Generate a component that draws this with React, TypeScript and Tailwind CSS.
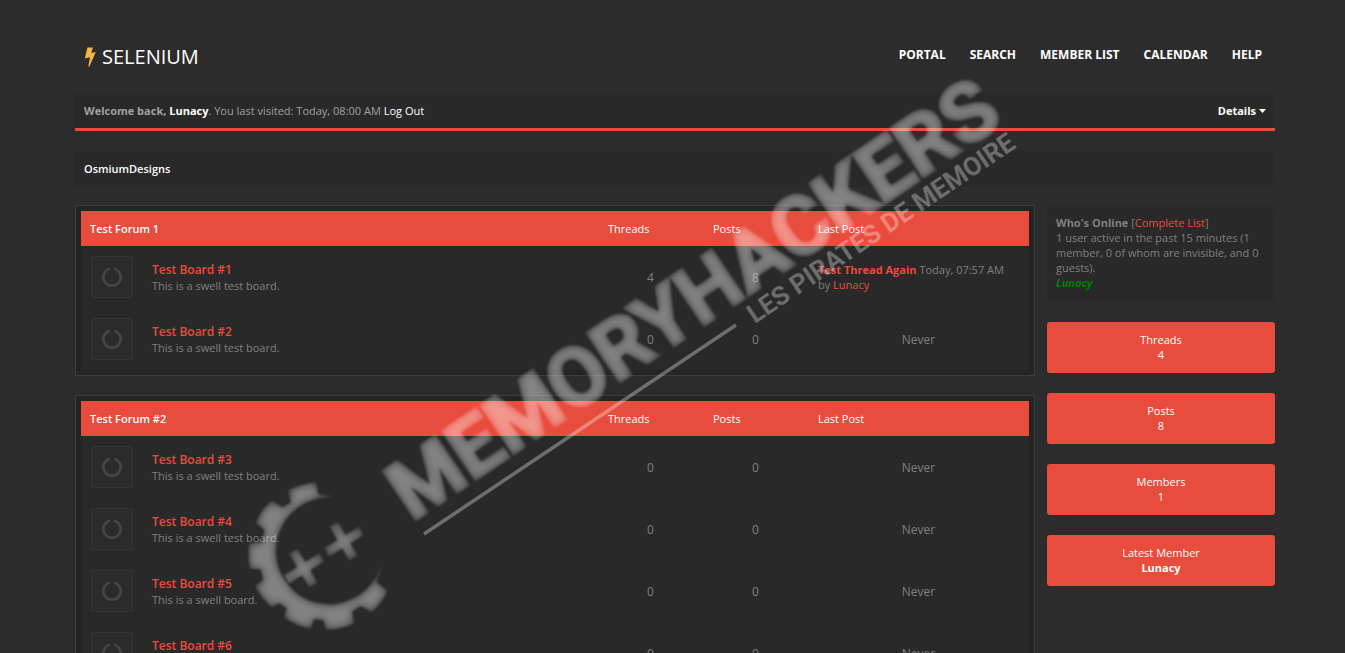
import React from 'react';

interface Board {
    name: string;
    description: string;
    threads: number;
    posts: number;
    lastPost?: { title: string; date: string; author: string };
}

interface Forum {
    title: string;
    boards: Board[];
}

const NAV_LINKS = ['Portal', 'Search', 'Member List', 'Calendar', 'Help'];

const FORUMS: Forum[] = [
    {
        title: 'Test Forum 1',
        boards: [
            {
                name: 'Test Board #1',
                description: 'This is a swell test board.',
                threads: 4,
                posts: 8,
                lastPost: { title: 'Test Thread Again', date: 'Today, 07:57 AM', author: 'Lunacy' }
            },
            { name: 'Test Board #2', description: 'This is a swell test board.', threads: 0, posts: 0 }
        ]
    },
    {
        title: 'Test Forum #2',
        boards: [
            { name: 'Test Board #3', description: 'This is a swell test board.', threads: 0, posts: 0 },
            { name: 'Test Board #4', description: 'This is a swell test board.', threads: 0, posts: 0 },
            { name: 'Test Board #5', description: 'This is a swell board.', threads: 0, posts: 0 },
            { name: 'Test Board #6', description: 'This is a swell board.', threads: 0, posts: 0 }
        ]
    }
];

const STATS = [
    { label: 'Threads', value: '4' },
    { label: 'Posts', value: '8' },
    { label: 'Members', value: '1' }
];

const BoltIcon = () => (
    <svg viewBox="0 0 12 20" className="h-5 w-3" aria-hidden="true">
        <path d="M3.4 0.5H9L7.2 6l4.6-1L5.4 19.5H4.3L6 10.2 0.8 11.4z" fill="#f7b643" />
    </svg>
);

const CaretIcon = () => (
    <svg viewBox="0 0 7 4" className="h-1 w-[7px]" aria-hidden="true">
        <path d="M0 0h7L3.5 4z" fill="#fff" />
    </svg>
);

const StatusIcon = () => (
    <div className="flex h-[42px] w-[42px] items-center justify-center border border-[#333] bg-[#2b2b2b]">
        <svg viewBox="0 0 20 20" className="h-5 w-5" fill="none" aria-hidden="true">
            <path d="M12 1.7a8.6 8.6 0 1 1-4 0" stroke="#464646" strokeWidth="2.7" />
        </svg>
    </div>
);

const Header = () => (
    <header className="flex items-center justify-between px-[9px] pt-10">
        <a href="#" className="flex h-[34px] items-center gap-1.5 text-xl text-white">
            <BoltIcon />
            SELENIUM
        </a>
        <nav className="flex gap-6 pr-1 pb-1 text-xs font-bold text-white uppercase">
            {NAV_LINKS.map((link) => (
                <a key={link} href="#">{link}</a>
            ))}
        </nav>
    </header>
);

const WelcomeBar = () => (
    <div className="mt-[19px] flex h-[38px] items-center justify-between border-b-[3px] border-[#e84c3d] bg-[#292929] px-[9px] text-[#a0a0a0]">
        <p>
            <strong>Welcome back, <a href="#" className="text-white">Lunacy</a></strong>. You last visited: Today, 08:00 AM{' '}
            <a href="#" className="text-white">Log Out</a>
        </p>
        <button type="button" className="flex items-center gap-[3px] font-bold text-white">
            Details
            <CaretIcon />
        </button>
    </div>
);

const ForumTable: React.FC<{ forum: Forum }> = ({ forum }) => (
    <div className="border border-[#3c3c3c] bg-[#242424] p-[5px]">
        <table className="w-full table-fixed border-collapse bg-[#292929]">
            <colgroup>
                <col className="w-[62px]" />
                <col />
                <col className="w-[105px]" />
                <col className="w-[105px]" />
                <col className="w-[221px]" />
            </colgroup>
            <thead>
                <tr className="h-[35px] bg-[#e84c3d] text-left text-white">
                    <th colSpan={2} className="px-[9px] font-semibold">{forum.title}</th>
                    <th className="px-2.5 font-normal">Threads</th>
                    <th className="px-2.5 font-normal">Posts</th>
                    <th className="px-2.5 font-normal">Last Post</th>
                </tr>
            </thead>
            <tbody>
                {forum.boards.map((board) => (
                    <tr key={board.name} className="h-[62px]">
                        <td className="px-2.5">
                            <StatusIcon />
                        </td>
                        <td className="px-[9px]">
                            <a href="#" className="block text-xs font-semibold text-[#e84c3d]">{board.name}</a>
                            {board.description}
                        </td>
                        <td className="pt-0.5 text-center text-xs">{board.threads}</td>
                        <td className="pt-0.5 text-center text-xs">{board.posts}</td>
                        {board.lastPost ? (
                            <td className="px-2.5">
                                <a href="#" className="font-bold text-[#e84c3d]">{board.lastPost.title}</a> {board.lastPost.date}
                                <br />
                                by <a href="#" className="text-[#e84c3d]">{board.lastPost.author}</a>
                            </td>
                        ) : (
                            <td className="pt-0.5 text-center text-xs">Never</td>
                        )}
                    </tr>
                ))}
            </tbody>
        </table>
    </div>
);

const Sidebar = () => (
    <aside className="flex w-[228px] shrink-0 flex-col gap-5">
        <div className="rounded-sm bg-[#292929] px-[9px] pt-2.5 pb-3">
            <strong>Who's Online</strong> [<a href="#" className="text-[#e84c3d]">Complete List</a>]
            <p>1 user active in the past 15 minutes (1 member, 0 of whom are invisible, and 0 guests).</p>
            <a href="#" className="font-bold text-[#008000] italic">Lunacy</a>
        </div>
        {STATS.map((stat) => (
            <div key={stat.label} className="flex h-[51px] flex-col items-center justify-center rounded-[3px] bg-[#e84c3d] pb-0.5 text-white">
                <span>{stat.label}</span>
                <span>{stat.value}</span>
            </div>
        ))}
        <div className="flex h-[51px] flex-col items-center justify-center rounded-[3px] bg-[#e84c3d] pb-0.5 text-white">
            <span>Latest Member</span>
            <a href="#" className="font-bold">Lunacy</a>
        </div>
    </aside>
);

// Translucent logo laid over the whole page
const Watermark = () => (
    <svg viewBox="0 0 1345 653" width="1345" height="653" className="pointer-events-none absolute top-0 left-0" aria-hidden="true">
        <defs>
            <filter id="bevel" x="-5%" y="-5%" width="110%" height="110%">
                <feGaussianBlur in="SourceAlpha" stdDeviation="4" result="inner" />
                <feComposite in="SourceGraphic" in2="inner" operator="in" result="shaded" />
                <feGaussianBlur in="shaded" stdDeviation="0.8" />
            </filter>
            <filter id="soft">
                <feGaussianBlur stdDeviation="0.7" />
            </filter>
        </defs>
        <g opacity="0.42">
            <g filter="url(#bevel)">
                <g transform="translate(230 470) scale(0.33333)">
                    <path
                        d="M310 78L265 72 258 37Q215 42 175 60L182 98 158 112 125 93Q90 120 78 160L103 180 98 215 58 220Q52 258 60 297L92 298 100 330 75 348Q95 385 125 412L148 400 170 415 162 442Q200 470 243 476L252 448 280 450 288 478Q332 480 373 460L366 425 393 408 425 427Q455 400 473 362L440 337 457 292 450 292A160 160 0 1 1 310 83Z"
                        fill="#fff"
                    />
                    <path d="M311 163L370 264M290 247L394 183M190 244L250 345M170 328L275 262" stroke="#fff" strokeWidth="29" />
                </g>
                <text
                    transform="translate(412 522) rotate(-34)"
                    fontFamily="Roboto, sans-serif"
                    fontWeight="700"
                    fontSize="82"
                    fill="#fff"
                    stroke="#fff"
                    strokeWidth="4"
                >
                    MEMORYHACKERS
                </text>
            </g>
        </g>
        <g opacity="0.32" filter="url(#soft)">
            <path d="M424 534L736 325" stroke="#fff" strokeWidth="3.5" />
            <text transform="translate(755 324) rotate(-34)" fontFamily="Roboto, sans-serif" fontWeight="700" fontSize="26" fill="#fff">
                LES PIRATES DE MEMOIRE
            </text>
        </g>
    </svg>
);

export default function App() {
    return (
        <div className="relative min-h-screen overflow-hidden bg-[#2c2c2c] pl-[5px] font-['Open_Sans',sans-serif] text-[11px] leading-[15px] text-[#808080]">
            <div className="mx-auto max-w-[1200px]">
                <Header />
                <WelcomeBar />
                <div className="mt-5 flex h-9 items-center rounded-sm bg-[#292929] px-[9px] pb-0.5">
                    <a href="#" className="font-semibold text-white">OsmiumDesigns</a>
                </div>
                <main className="mt-[18px] flex items-start gap-3">
                    <div className="flex min-w-0 flex-1 flex-col gap-[19px]">
                        {FORUMS.map((forum) => (
                            <ForumTable key={forum.title} forum={forum} />
                        ))}
                    </div>
                    <Sidebar />
                </main>
            </div>
            <Watermark />
        </div>
    );
}
